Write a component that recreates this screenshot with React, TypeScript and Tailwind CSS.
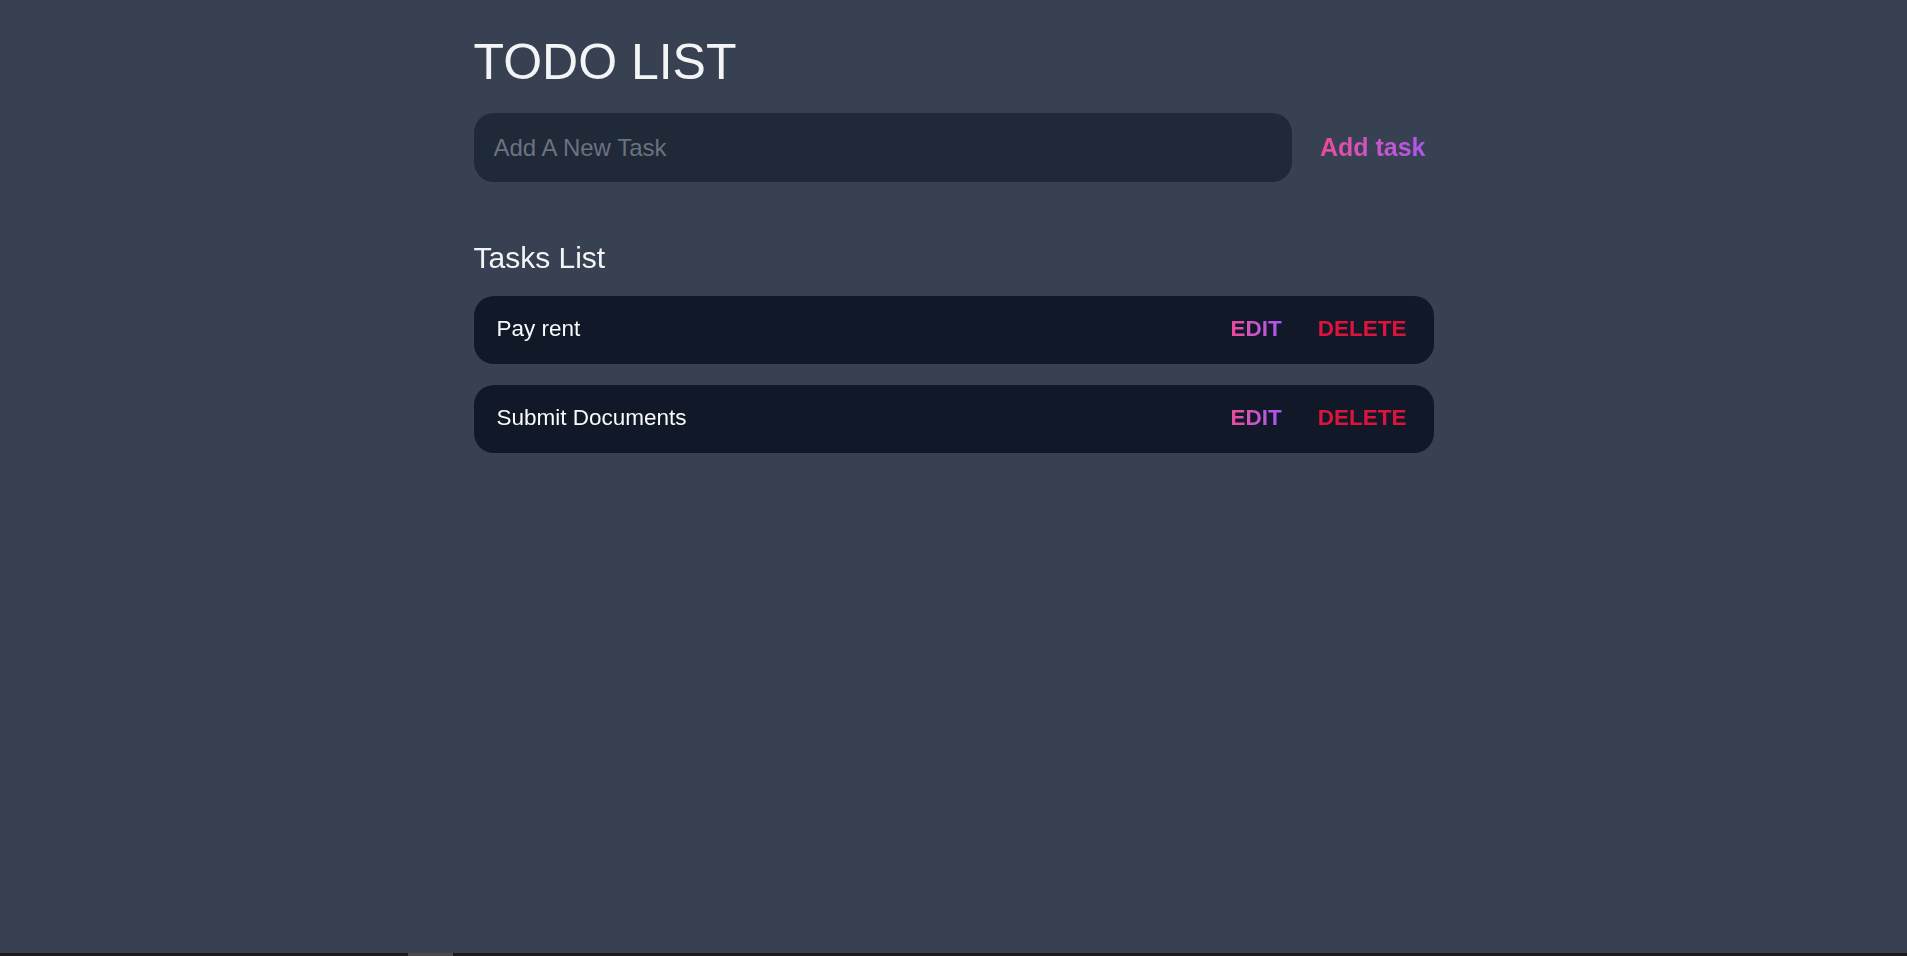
import { useState } from 'react';

type Task = { id: number; title: string };

const initialTasks: Task[] = [
  { id: 1, title: 'Pay rent' },
  { id: 2, title: 'Submit Documents' },
];

const gradientText = 'bg-linear-to-r from-[#ec4899] to-[#a855f7] bg-clip-text text-transparent';

const TaskRow = ({ task, onDelete }: { task: Task; onDelete: (id: number) => void }) => (
  <li className="h-[68px] flex items-center justify-between pl-[23px] pr-[27px] rounded-[20px] bg-[#111827]">
    <span className="text-[22.5px] leading-[26px] text-[#f9fafb] pb-[2px]">{task.title}</span>
    <div className="flex items-center gap-[36px] pb-[2px]">
      <button className={`text-[22.5px] leading-[26px] font-bold ${gradientText}`}>EDIT</button>
      <button
        onClick={() => onDelete(task.id)}
        className="text-[22.5px] leading-[26px] font-bold text-[#dc143c]"
      >
        DELETE
      </button>
    </div>
  </li>
);

export default function App() {
  const [tasks, setTasks] = useState(initialTasks);
  const [draft, setDraft] = useState('');

  const addTask = () => {
    if (!draft.trim()) return;
    setTasks([...tasks, { id: Date.now(), title: draft.trim() }]);
    setDraft('');
  };

  return (
    <div className="h-screen flex flex-col bg-[#374151] font-['Liberation_Sans',Arial,sans-serif] overflow-hidden">
      <main className="flex-1 w-[960px] mx-auto pt-[33px]">
        <h1 className="text-[50px] leading-[58px] text-[#f3f4f6]">TODO LIST</h1>
        <div className="mt-[22px] flex items-center gap-[28px]">
          <input
            autoFocus
            value={draft}
            onChange={(e) => setDraft(e.target.value)}
            placeholder="Add A New Task"
            className="flex-1 h-[69px] pl-[20px] rounded-[20px] bg-[#1f2937] text-[24px] text-[#f3f4f6] caret-white placeholder:text-[#6b7280] outline-none"
          />
          <button onClick={addTask} className={`pr-[8px] text-[25px] font-bold ${gradientText}`}>
            Add task
          </button>
        </div>
        <h2 className="mt-[58px] text-[30px] leading-[35px] text-[#f3f4f6]">Tasks List</h2>
        <ul className="mt-[21px] flex flex-col gap-[21px]">
          {tasks.map((t) => (
            <TaskRow key={t.id} task={t} onDelete={(id) => setTasks(tasks.filter((x) => x.id !== id))} />
          ))}
        </ul>
      </main>
      <div className="h-[3px] bg-[#1b1b1b] flex">
        <div className="ml-[408px] w-[45px] bg-[#4a4a4a]" />
      </div>
    </div>
  );
}
